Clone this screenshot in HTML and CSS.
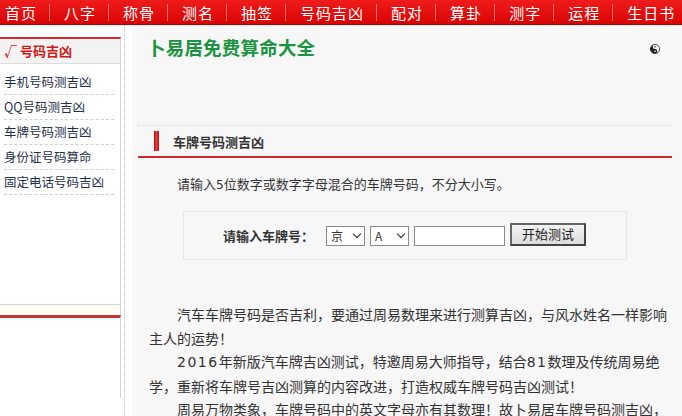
FILE: index.html
```html
<!DOCTYPE html>
<html lang="zh">
<head>
<meta charset="utf-8">
<title>车牌号码测吉凶</title>
<link rel="stylesheet" href="styles.css">
</head>
<body>
<div class="nav">
  <a class="nav-item first">首页</a>
  <a class="nav-item">八字</a>
  <a class="nav-item">称骨</a>
  <a class="nav-item">测名</a>
  <a class="nav-item">抽签</a>
  <a class="nav-item">号码吉凶</a>
  <a class="nav-item">配对</a>
  <a class="nav-item">算卦</a>
  <a class="nav-item">测字</a>
  <a class="nav-item">运程</a>
  <a class="nav-item last">生日书</a>
</div>
<div class="wrap">
  <div class="side">
    <div class="side-box">
      <div class="side-head">√ 号码吉凶</div>
      <ul class="side-list">
        <li>手机号码测吉凶</li>
        <li>QQ号码测吉凶</li>
        <li>车牌号码测吉凶</li>
        <li>身份证号码算命</li>
        <li>固定电话号码吉凶</li>
      </ul>
    </div>
    <div class="side-band"></div>
    <div class="side-box2"></div>
  </div>
  <div class="divider"></div>
  <div class="main">
    <div class="top">
      <div class="logo">卜易居免费算命大全</div>
      <svg class="taiji" width="10" height="10" viewBox="0 0 10 10">
        <circle cx="5" cy="5" r="4.6" fill="#fff" stroke="#222" stroke-width="0.8"/>
        <path d="M5 0.4 A4.6 4.6 0 0 0 5 9.6 A2.3 2.3 0 0 0 5 5 A2.3 2.3 0 0 1 5 0.4 Z" fill="#222"/>
        <circle cx="5" cy="2.7" r="0.8" fill="#222"/>
        <circle cx="5" cy="7.3" r="0.8" fill="#fff"/>
      </svg>
    </div>
    <div class="sec-head"><span class="bar"></span><span class="sec-title">车牌号码测吉凶</span></div>
    <p class="intro">请输入<span class="num">5</span>位数字或数字字母混合的车牌号码，不分大小写。</p>
    <div class="form">
      <span class="label">请输入车牌号：</span>
      <span class="sel">京<span class="chev"></span></span>
      <span class="sel sel-a">A<span class="chev"></span></span>
      <span class="input"></span>
      <span class="btn">开始测试</span>
    </div>
    <div class="article">
      <p>汽车车牌号码是否吉利，要通过周易数理来进行测算吉凶，与风水姓名一样影响主人的运势！</p>
      <p><span class="num">2016</span>年新版汽车牌吉凶测试，特邀周易大师指导，结合<span class="num">81</span>数理及传统周易绝学，重新将车牌号吉凶测算的内容改进，打造权威车牌号码吉凶测试！</p>
      <p>周易万物类象，车牌号码中的英文字母亦有其数理！故卜易居车牌号码测吉凶，</p>
    </div>
  </div>
</div>
</body>
</html>
```
FILE: styles.css
```css
html, body {
  margin: 0;
  padding: 0;
}
body {
  width: 682px;
  height: 416px;
  overflow: hidden;
  font-family: "Noto Sans CJK SC", "Noto Sans", sans-serif;
  color: #333;
  background: #fff;
}
.nav {
  height: 25px;
  display: flex;
  align-items: center;
  background: linear-gradient(#f01c1c, #d80404);
  border-bottom: 1px solid #b80000;
  box-sizing: border-box;
  overflow: hidden;
}
.nav-item {
  color: #fff;
  font-size: 15px;
  line-height: 17px;
  letter-spacing: 1px;
  padding: 0 12px 0 14px;
  border-left: 1px solid #f46a6a;
  white-space: nowrap;
}
.nav-item.first {
  border-left: none;
  padding-left: 5px;
}
.wrap {
  display: flex;
  height: 391px;
}
.side {
  width: 121px;
  flex: none;
  padding-top: 12px;
}
.side-box {
  border-top: 2px solid #d42a2a;
  border-right: 1px solid #cfd4d4;
  border-bottom: 1px solid #cfd4d4;
  height: 265px;
  background: #fff;
}
.side-head {
  height: 24px;
  line-height: 24px;
  background: #f3f3f3;
  border-bottom: 1px solid #ddd;
  color: #d01818;
  font-weight: bold;
  font-size: 13px;
  padding-left: 4px;
}
.side-list {
  list-style: none;
  margin: 0;
  padding: 6px 6px 0 4px;
}
.side-list li {
  font-size: 12.5px;
  line-height: 24px;
  color: #1f2f4a;
  border-bottom: 1px dashed #cfcfcf;
  white-space: nowrap;
}
.side-band {
  height: 10px;
  background: #fffdf4;
  border-right: 1px solid #cfd4d4;
}
.side-box2 {
  border-top: 3px solid #cc3333;
  border-right: 1px solid #cfd4d4;
  height: 80px;
  background: #fff;
}
.divider {
  width: 8px;
  flex: none;
  margin-left: 3px;
  border-left: 1px dotted #bbb;
  box-sizing: border-box;
}
.main {
  flex: 1;
  background: #f7f7f7;
  padding: 0 10px 0 6px;
  min-width: 0;
}
.top {
  height: 90px;
  display: flex;
  align-items: flex-start;
  justify-content: space-between;
  padding: 10px 12px 0 9px;
  border-bottom: 1px dotted #d8d8d8;
}
.logo {
  font-size: 18.5px;
  font-weight: bold;
  color: #1a9440;
  line-height: 24px;
  letter-spacing: 0.2px;
}
.taiji {
  margin-top: 9px;
}
.sec-head {
  display: flex;
  align-items: center;
  height: 30px;
  border-bottom: 2px solid #cc2a2e;
  padding-left: 16px;
}
.bar {
  width: 5px;
  height: 20px;
  background: linear-gradient(90deg, #b01010, #f03a3a, #b01010);
  margin-right: 14px;
}
.sec-title {
  font-size: 13px;
  font-weight: bold;
  color: #333;
}
.num {
  font-family: "DejaVu Sans", sans-serif;
  letter-spacing: 1.5px;
}
.intro .num {
  letter-spacing: 0;
  font-size: 12px;
}
.intro {
  margin: 16px 0 0 0;
  padding-left: 11px;
  text-indent: 28px;
  font-size: 13px;
  line-height: 20px;
}
.form {
  width: 444px;
  height: 49px;
  box-sizing: border-box;
  margin: 16px auto 0;
  border: 1px solid #e6e6e6;
  background: #f7f7f7;
  display: flex;
  align-items: center;
  padding-left: 39px;
}
.label {
  font-size: 13px;
  font-weight: bold;
  color: #333;
  margin-right: 12px;
}
.sel {
  width: 39px;
  height: 20px;
  box-sizing: border-box;
  border: 1px solid #8a8a8a;
  background: #fff;
  font-size: 12px;
  line-height: 18px;
  padding-left: 4px;
  display: flex;
  align-items: center;
  justify-content: space-between;
  padding-right: 4px;
  margin-right: 5px;
}
.chev {
  width: 5px;
  height: 5px;
  border-right: 1.6px solid #222;
  border-bottom: 1.6px solid #222;
  transform: rotate(45deg);
  margin-top: -4px;
}
.input {
  width: 91px;
  height: 20px;
  box-sizing: border-box;
  border: 1px solid #8a8a8a;
  background: #fff;
  margin-right: 5px;
}
.btn {
  width: 76px;
  height: 23px;
  box-sizing: border-box;
  border: 2px solid #444;
  border-top-color: #666;
  border-left-color: #666;
  background: linear-gradient(#f4f4f4, #dcdcdc);
  font-size: 13px;
  text-align: center;
  line-height: 18px;
  color: #222;
  margin-top: -3px;
}
.article {
  margin-top: 43px;
  padding: 0 4px 0 11px;
}
.article p {
  margin: 0;
  text-indent: 28px;
  font-size: 14px;
  line-height: 23.5px;
  color: #333;
}
```
